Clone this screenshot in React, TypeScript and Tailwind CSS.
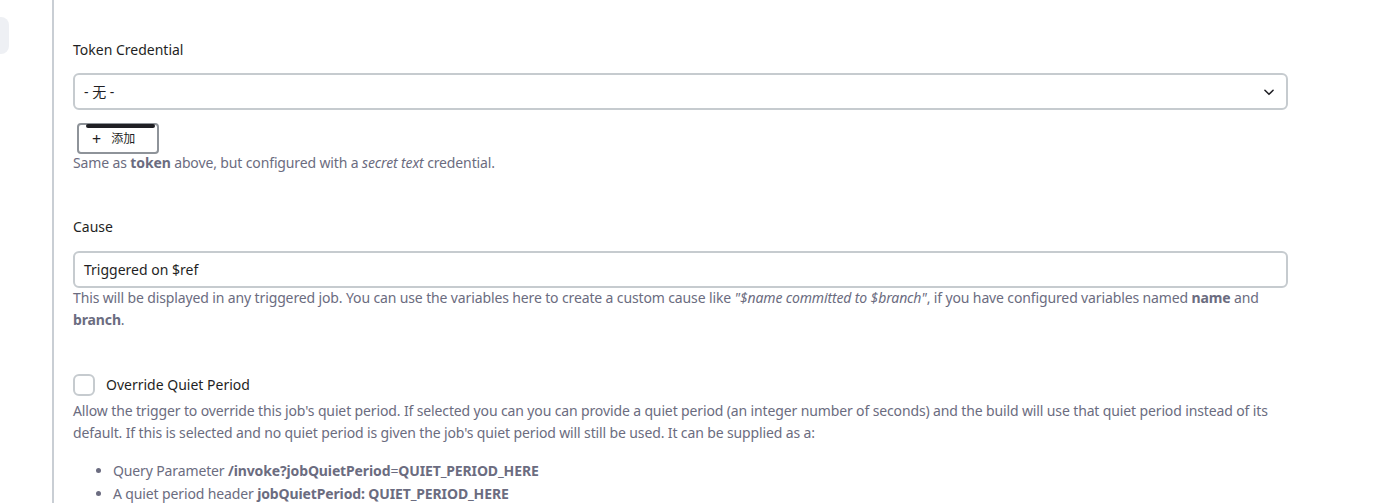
import React from "react";

const font = { fontFamily: '"Segoe UI", "Noto Sans", "Noto Sans CJK SC", sans-serif' };

const Description: React.FC<{ children: React.ReactNode; className?: string }> = ({
  children,
  className = "",
}) => (
  <div className={`text-[14px] leading-[22px] tracking-[-0.13px] text-[#6b6c80] ${className}`}>
    {children}
  </div>
);

export default function App() {
  return (
    <div className="flex min-h-[503px] bg-white text-[#1f1f24]" style={font}>
      {/* Sidebar strip */}
      <div className="w-[52px] shrink-0 pt-[17px]">
        <div className="h-[37px] w-[9px] rounded-r-[8px] bg-[#eef0f4]" />
      </div>
      <div className="w-[2px] shrink-0 bg-[#c9ced4]" />

      {/* Form */}
      <div className="flex-1 pl-[19px] pr-[111px]">
        <div className="pt-[40px] text-[14px] leading-[20px]">Token Credential</div>
        <div className="mt-[13px] flex h-[37px] items-center justify-between rounded-[6px] border-2 border-[#c6cbcf] pl-[9px] pr-[10px] text-[14px]">
          <span>- 无 -</span>
          <svg width="14" height="14" viewBox="0 0 24 24" fill="none" stroke="#1f1f24" strokeWidth="2.6" strokeLinecap="round" strokeLinejoin="round">
            <path d="M5 9l7 7 7-7" />
          </svg>
        </div>
        <div className="mt-[13px] ml-[4px] w-[82px]">
          <div className="relative flex h-[31px] items-center rounded-[4px] border-2 border-[#8e9399] pl-[13px] text-[12px]">
            <div className="absolute -top-[1px] left-[7px] right-[2px] h-[4px] rounded-full bg-[#1f1f24]" />
            <span className="mr-[10px] text-[16px] leading-none">+</span>
            <span>添加</span>
          </div>
        </div>
        <Description className="-mt-[2px]">
          Same as <b className="font-bold">token</b> above, but configured with a{" "}
          <i>secret text</i> credential.
        </Description>

        <div className="mt-[43px] text-[14px] leading-[20px]">Cause</div>
        <div className="mt-[14px] flex h-[37px] items-center rounded-[6px] border-2 border-[#c6cbcf] pl-[9px] text-[14px]">
          Triggered on $ref
        </div>
        <Description className="-mt-[1px]">
          This will be displayed in any triggered job. You can use the variables here to create a
          custom cause like <i>"$name committed to $branch"</i>, if you have configured variables named{" "}
          <b className="font-bold">name</b> and <b className="font-bold">branch</b>.
        </Description>

        <div className="mt-[43px] flex items-center">
          <div className="h-[22px] w-[22px] rounded-[6px] border-2 border-[#c6cbcf]" />
          <span className="ml-[11px] text-[14px] leading-[20px]">Override Quiet Period</span>
        </div>
        <Description className="mt-[4px]">
          Allow the trigger to override this job's quiet period. If selected you can you can provide a
          quiet period (an integer number of seconds) and the build will use that quiet period instead
          of its default. If this is selected and no quiet period is given the job's quiet period will
          still be used. It can be supplied as a:
        </Description>
        <ul className="mt-[15px] list-disc pl-[40px] text-[14px] leading-[23px] tracking-[-0.13px] text-[#6b6c80]">
          <li>
            Query Parameter <b className="font-bold">/invoke?jobQuietPeriod</b>=
            <b className="font-bold">QUIET_PERIOD_HERE</b>
          </li>
          <li>
            A quiet period header <b className="font-bold">jobQuietPeriod: QUIET_PERIOD_HERE</b>
          </li>
        </ul>
      </div>
    </div>
  );
}
